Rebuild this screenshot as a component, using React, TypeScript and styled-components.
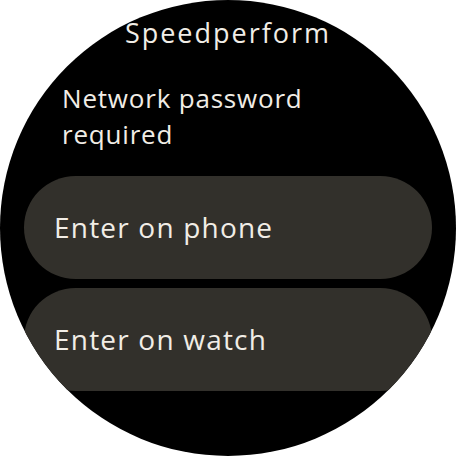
import React from 'react';
import styled, { createGlobalStyle } from 'styled-components';

const GlobalStyle = createGlobalStyle`
  html, body {
    margin: 0;
    padding: 0;
    background: #ffffff;
  }

  body {
    font-family: 'Open Sans', Roboto, sans-serif;
  }
`;

const actions = ['Enter on phone', 'Enter on watch'];

export default function App() {
  return (
    <>
      <GlobalStyle />
      <WatchFace>
        <Viewport>
          <Title>Speedperform</Title>
          <Message>Network password required</Message>
          <ChipList>
            {actions.map(a => (
              <Chip key={a} type="button">
                {a}
              </Chip>
            ))}
          </ChipList>
        </Viewport>
      </WatchFace>
    </>
  );
}

const WatchFace = styled.div`
  width: 456px;
  height: 456px;
  border-radius: 50%;
  background: #000000;
  overflow: hidden;
`;

const Viewport = styled.div`
  height: 392px;
  overflow: hidden;
  padding: 17px 24px 0;
  box-sizing: border-box;
  display: flex;
  flex-direction: column;
`;

const Title = styled.h1`
  margin: 0;
  font-size: 27px;
  line-height: 32px;
  font-weight: 400;
  letter-spacing: 2px;
  color: #f1ede6;
  text-align: center;
`;

const Message = styled.p`
  margin: 31px 0 0;
  padding: 0 90px 0 38px;
  font-size: 26px;
  line-height: 36px;
  font-weight: 400;
  letter-spacing: 0.8px;
  color: #f1ede6;
`;

const ChipList = styled.div`
  margin: 24px 0 0;
  display: flex;
  flex-direction: column;
  gap: 9px;
`;

const Chip = styled.button`
  height: 103px;
  flex-shrink: 0;
  padding: 0 0 2px 30px;
  display: flex;
  align-items: center;
  background: #32302b;
  border: none;
  border-radius: 52px;
  color: #f1ede6;
  font-family: 'Open Sans', Roboto, sans-serif;
  font-size: 28px;
  font-weight: 400;
  letter-spacing: 1.2px;
  text-align: left;
  cursor: pointer;
`;
